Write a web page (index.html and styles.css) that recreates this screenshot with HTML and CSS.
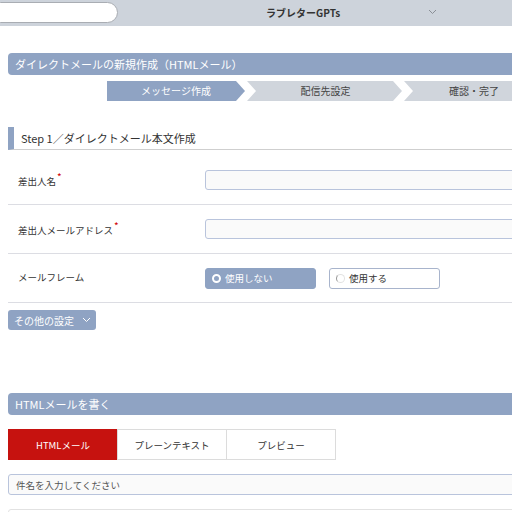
FILE: index.html
```html
<!DOCTYPE html>
<html lang="ja">
<head>
<meta charset="utf-8">
<link rel="stylesheet" href="styles.css">
</head>
<body>
<header class="topbar">
  <div class="search"></div>
  <div class="title">ラブレターGPTs</div>
  <svg class="caret" width="9" height="6" viewBox="0 0 9 6"><path d="M1 1 L4.5 4.5 L8 1" fill="none" stroke="#8a8f96" stroke-width="1"/></svg>
</header>
<main class="page">
  <h2 class="sec-head first">ダイレクトメールの新規作成（HTMLメール）</h2>
  <div class="steps">
    <div class="step s1 active">メッセージ作成</div>
    <div class="step s2">配信先設定</div>
    <div class="step s3">確認・完了</div>
  </div>
  <h3 class="step-title">Step 1／ダイレクトメール本文作成</h3>
  <div class="form">
    <div class="row r1">
      <div class="label">差出人名<span class="req">*</span></div>
      <div class="field"><div class="input"></div></div>
    </div>
    <div class="row">
      <div class="label">差出人メールアドレス<span class="req">*</span></div>
      <div class="field"><div class="input"></div></div>
    </div>
    <div class="row">
      <div class="label">メールフレーム</div>
      <div class="field radios">
        <div class="radio on"><span class="dot"></span>使用しない</div>
        <div class="radio"><span class="dot"></span>使用する</div>
      </div>
    </div>
  </div>
  <div class="more">その他の設定<svg width="9" height="6" viewBox="0 0 9 6"><path d="M1 1 L4.5 4.5 L8 1" fill="none" stroke="#fff" stroke-width="1"/></svg></div>
  <h2 class="sec-head second">HTMLメールを書く</h2>
  <div class="tabs">
    <div class="tab active">HTMLメール</div>
    <div class="tab">プレーンテキスト</div>
    <div class="tab">プレビュー</div>
  </div>
  <div class="subject">件名を入力してください</div>
  <div class="body-box"></div>
</main>
</body>
</html>
```
FILE: styles.css
```css
html, body {
  margin: 0;
  padding: 0;
  background: #fff;
  overflow: hidden;
  width: 512px;
  height: 512px;
  font-family: "Noto Sans CJK JP", "Noto Sans", sans-serif;
  color: #333;
}
.topbar {
  height: 26px;
  background: #cdd3db;
  display: flex;
  align-items: center;
  position: relative;
}
.search {
  width: 128px;
  height: 21px;
  margin-left: -10px;
  margin-top: -2px;
  background: #fff;
  border: 1px solid #a9adb3;
  border-radius: 11px;
  box-sizing: border-box;
}
.title {
  margin-left: 148px;
  font-size: 10px;
  font-weight: bold;
  color: #333;
  margin-top: -1px;
}
.caret {
  margin-left: 88px;
  margin-top: -3px;
}
.page {
  width: 600px;
  padding-left: 8px;
}
.sec-head {
  margin: 0;
  height: 22px;
  line-height: 22px;
  background: #8fa3c3;
  color: #fff;
  font-size: 11px;
  font-weight: normal;
  padding-left: 7px;
  border-radius: 4px 0 0 4px;
}
.sec-head.first { margin-top: 27px; }
.steps {
  display: flex;
  margin-top: 6px;
  margin-left: 99px;
  height: 20px;
}
.step {
  height: 20px;
  line-height: 20px;
  font-size: 10px;
  text-align: center;
  background: #d0d5dc;
  color: #444;
}
.step.active { background: #8fa3c3; color: #fff; }
.s1 {
  width: 138px;
  clip-path: polygon(0 0, calc(100% - 9px) 0, 100% 50%, calc(100% - 9px) 100%, 0 100%);
}
.s2 {
  width: 153px;
  margin-left: 2px;
  padding-left: 2px;
  clip-path: polygon(0 0, calc(100% - 9px) 0, 100% 50%, calc(100% - 9px) 100%, 0 100%, 9px 50%);
}
.s3 {
  width: 140px;
  margin-left: 2px;
  padding-right: 60px;
  clip-path: polygon(0 0, 100% 0, 100% 100%, 0 100%, 9px 50%);
}
.step-title {
  margin: 26px 0 0 0;
  height: 22px;
  line-height: 22px;
  font-size: 11px;
  font-weight: normal;
  color: #333;
  border-left: 6px solid #8fa3c3;
  padding-left: 7px;
  border-bottom: 1px solid #cfcfcf;
}
.row {
  display: flex;
  align-items: center;
  height: 48px;
  border-bottom: 1px solid #dcdde3;
}
.row.r1 { padding-top: 6px; box-sizing: border-box; height: 55px; }
.label {
  width: 187px;
  padding-left: 10px;
  font-size: 9.5px;
  line-height: 12px;
  margin-top: -3px;
  color: #333;
}
.req {
  color: #d10000;
  font-size: 10px;
  vertical-align: 4px;
  margin-left: 1px;
}
.field { flex: 1; }
.input {
  height: 20px;
  background: #fafafa;
  border: 1px solid #b9c4dc;
  border-radius: 3px;
  box-sizing: border-box;
}
.radios { display: flex; gap: 13px; }
.radio {
  width: 111px;
  height: 21px;
  box-sizing: border-box;
  border: 1px solid #a8b4cc;
  border-radius: 3px;
  font-size: 9.5px;
  display: flex;
  align-items: center;
  color: #333;
}
.radio .dot {
  width: 7px;
  height: 7px;
  border-radius: 50%;
  border: 1px solid #e2e2e2;
  border-left-color: #999;
  margin-left: 6px;
  margin-right: 4px;
}
.radio.on {
  background: #8fa3c3;
  border-color: #8fa3c3;
  color: #fff;
}
.radio.on .dot {
  width: 5px;
  height: 5px;
  border: 2.5px solid #fff;
  background: #8fa3c3;
  margin-left: 6px;
}
.more {
  margin-top: 7px;
  width: 88px;
  height: 20px;
  box-sizing: border-box;
  background: #8fa3c3;
  border-radius: 3px;
  color: #fff;
  font-size: 10px;
  display: flex;
  align-items: center;
  padding-left: 6px;
  gap: 8px;
}
.sec-head.second { margin-top: 63px; }
.tabs {
  display: flex;
  margin-top: 14px;
}
.tab {
  width: 110px;
  height: 31px;
  box-sizing: border-box;
  border: 1px solid #dcdcdc;
  margin-right: -1px;
  display: flex;
  align-items: center;
  justify-content: center;
  font-size: 9.5px;
  color: #333;
  background: #fff;
}
.tab.active {
  background: #c6120f;
  border-color: #c6120f;
  color: #fff;
}
.subject {
  margin-top: 14px;
  height: 21px;
  box-sizing: border-box;
  border: 1px solid #b9c4dc;
  border-radius: 3px;
  background: #fafafa;
  font-size: 9.5px;
  color: #555;
  display: flex;
  align-items: center;
  padding-left: 7px;
}
.body-box {
  margin-top: 14px;
  height: 40px;
  border: 1px solid #e2e2e2;
  border-radius: 3px;
}
```
